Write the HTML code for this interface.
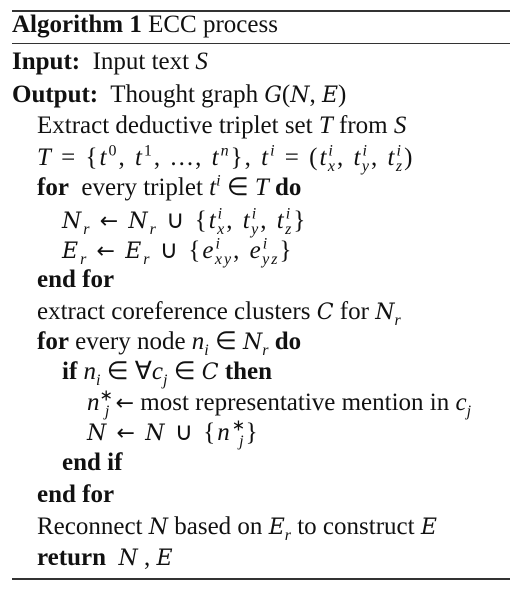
<!DOCTYPE html>
<html><head><meta charset="utf-8"><style>
html,body{margin:0;padding:0;background:#fff;}
body{width:523px;height:595px;position:relative;overflow:hidden;font-family:"Liberation Serif",serif;color:#111;font-size:25px;}
.r{position:absolute;height:30px;line-height:30px;white-space:nowrap;}
.rule{position:absolute;left:12px;width:498px;background:#333;}
b{font-weight:bold}
i{font-style:italic}
sub,sup{font-size:16px;line-height:0}
.c{font-style:italic;font-family:"DejaVu Serif","Liberation Serif",serif;font-size:22px}
.m{letter-spacing:2px}
.a{font-family:"DejaVu Sans",sans-serif;font-size:22px}
</style></head><body>
<div class="rule" style="top:10px;height:2px"></div>
<div class="r" style="left:12px;top:10px"><b>Algorithm 1</b> ECC process</div>
<div class="rule" style="top:43px;height:1px"></div>
<div class="r" style="left:12px;top:47px"><b>Input:</b>&nbsp; Input text <i>S</i></div>
<div class="r" style="left:12px;top:80px"><b>Output:</b>&nbsp; Thought graph <span class="c">G</span>(<span class="c">N</span>, <span class="c">E</span>)</div>
<div class="r" style="left:37px;top:111px">Extract deductive triplet set <i>T</i> from <i>S</i></div>
<div class="r m" style="left:37px;top:143px"><i>T</i> = {<i>t</i><sup>0</sup>, <i>t</i><sup>1</sup>, ..., <i>t</i><sup><i>n</i></sup>}, <i>t</i><sup><i>i</i></sup> = (<i>t</i><sup><i>i</i></sup><sub style="margin-left:-7px"><i>x</i></sub>, <i>t</i><sup><i>i</i></sup><sub style="margin-left:-7px"><i>y</i></sub>, <i>t</i><sup><i>i</i></sup><sub style="margin-left:-7px"><i>z</i></sub>)</div>
<div class="r" style="left:37px;top:173px"><b>for</b>&nbsp; every triplet <i>t</i><sup><i>i</i></sup> ∈ <i>T</i> <b>do</b></div>
<div class="r m" style="left:62px;top:206px"><span class="c">N</span><sub><i>r</i></sub> <span class="a">←</span> <span class="c">N</span><sub><i>r</i></sub> ∪ {<i>t</i><sup><i>i</i></sup><sub style="margin-left:-7px"><i>x</i></sub>, <i>t</i><sup><i>i</i></sup><sub style="margin-left:-7px"><i>y</i></sub>, <i>t</i><sup><i>i</i></sup><sub style="margin-left:-7px"><i>z</i></sub>}</div>
<div class="r m" style="left:62px;top:236px"><span class="c">E</span><sub><i>r</i></sub> <span class="a">←</span> <span class="c">E</span><sub><i>r</i></sub> ∪ {<i>e</i><sup><i>i</i></sup><sub style="margin-left:-7px"><i>xy</i></sub>, <i>e</i><sup><i>i</i></sup><sub style="margin-left:-7px"><i>yz</i></sub>}</div>
<div class="r" style="left:37px;top:265px"><b>end for</b></div>
<div class="r" style="left:37px;top:297px">extract coreference clusters <span class="c">C</span> for <span class="c">N</span><sub><i>r</i></sub></div>
<div class="r" style="left:37px;top:327px"><b>for</b> every node <i>n<sub>i</sub></i> ∈ <span class="c">N</span><sub><i>r</i></sub> <b>do</b></div>
<div class="r" style="left:62px;top:357px"><b>if</b> <i>n<sub>i</sub></i> ∈ ∀<i>c<sub>j</sub></i> ∈ <span class="c">C</span> <b>then</b></div>
<div class="r" style="left:87px;top:388px"><i>n</i><sup>∗</sup><sub style="margin-left:-8px"><i>j</i></sub> <span class="a">←</span> most representative mention in <i>c<sub>j</sub></i></div>
<div class="r m" style="left:87px;top:418px"><span class="c">N</span> <span class="a">←</span> <span class="c">N</span> ∪ {<i>n</i><sup>∗</sup><sub style="margin-left:-8px"><i>j</i></sub>}</div>
<div class="r" style="left:62px;top:448px"><b>end if</b></div>
<div class="r" style="left:37px;top:480px"><b>end for</b></div>
<div class="r" style="left:37px;top:512px">Reconnect <span class="c">N</span> based on <span class="c">E</span><sub><i>r</i></sub> to construct <span class="c">E</span></div>
<div class="r" style="left:37px;top:543px"><b>return</b>&nbsp; <span class="c">N</span> , <span class="c">E</span></div>
<div class="rule" style="top:578px;height:2px"></div>
</body></html>
